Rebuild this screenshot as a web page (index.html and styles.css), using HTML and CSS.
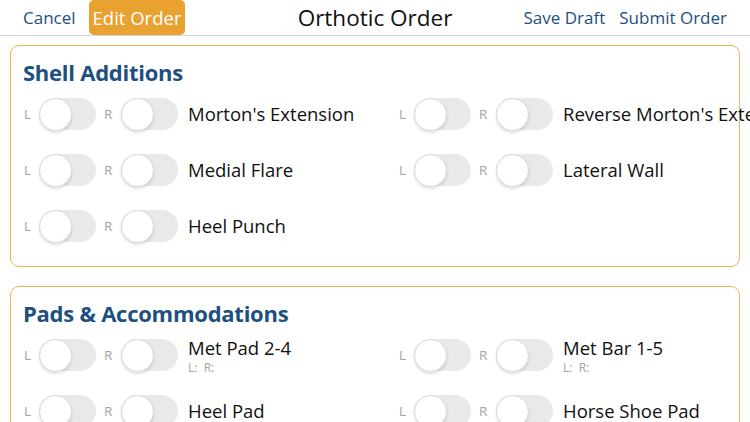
FILE: index.html
```html
<!DOCTYPE html>
<html lang="en">
<head>
<meta charset="utf-8">
<title>Orthotic Order</title>
<link rel="stylesheet" href="styles.css">
</head>
<body>
<header class="topbar">
  <div class="left">
    <span class="link">Cancel</span>
    <span class="btn-edit">Edit Order</span>
  </div>
  <h1 class="title">Orthotic Order</h1>
  <div class="right">
    <span class="link">Save Draft</span>
    <span class="link">Submit Order</span>
  </div>
</header>
<main class="content">
  <section class="card">
    <h2 class="card-title">Shell Additions</h2>
    <div class="grid">
      <div class="item"><span class="side">L</span><span class="toggle"></span><span class="side r">R</span><span class="toggle"></span><div class="label"><div class="name">Morton's Extension</div></div></div>
      <div class="item"><span class="side">L</span><span class="toggle"></span><span class="side r">R</span><span class="toggle"></span><div class="label"><div class="name">Reverse Morton's Extension</div></div></div>
      <div class="item"><span class="side">L</span><span class="toggle"></span><span class="side r">R</span><span class="toggle"></span><div class="label"><div class="name">Medial Flare</div></div></div>
      <div class="item"><span class="side">L</span><span class="toggle"></span><span class="side r">R</span><span class="toggle"></span><div class="label"><div class="name">Lateral Wall</div></div></div>
      <div class="item"><span class="side">L</span><span class="toggle"></span><span class="side r">R</span><span class="toggle"></span><div class="label"><div class="name">Heel Punch</div></div></div>
    </div>
  </section>
  <section class="card">
    <h2 class="card-title">Pads &amp; Accommodations</h2>
    <div class="grid">
      <div class="item"><span class="side">L</span><span class="toggle"></span><span class="side r">R</span><span class="toggle"></span><div class="label"><div class="name">Met Pad 2-4</div><div class="sub">L:&nbsp; R:</div></div></div>
      <div class="item"><span class="side">L</span><span class="toggle"></span><span class="side r">R</span><span class="toggle"></span><div class="label"><div class="name">Met Bar 1-5</div><div class="sub">L:&nbsp; R:</div></div></div>
      <div class="item"><span class="side">L</span><span class="toggle"></span><span class="side r">R</span><span class="toggle"></span><div class="label"><div class="name">Heel Pad</div></div></div>
      <div class="item"><span class="side">L</span><span class="toggle"></span><span class="side r">R</span><span class="toggle"></span><div class="label"><div class="name">Horse Shoe Pad</div></div></div>
    </div>
  </section>
</main>
</body>
</html>
```

FILE: styles.css
```css
html, body {
  margin: 0;
  padding: 0;
  background: #ffffff;
  overflow: hidden;
  width: 750px;
  height: 422px;
}
body {
  font-family: "Open Sans", "Noto Sans", sans-serif;
  color: #111;
}
.topbar {
  display: grid;
  grid-template-columns: 1fr auto 1fr;
  align-items: center;
  height: 36px;
  border-bottom: 1px solid #d6d6d6;
  box-sizing: border-box;
}
.left {
  display: flex;
  align-items: center;
  padding-left: 23px;
  gap: 13px;
  height: 100%;
}
.right {
  display: flex;
  align-items: center;
  justify-content: flex-end;
  padding-right: 23px;
  gap: 14px;
}
.link {
  color: #1d4f7f;
  font-size: 17px;
  font-weight: 500;
}
.btn-edit {
  background: #e9a12f;
  color: #fff;
  font-size: 18.5px;
  height: 35px;
  align-self: flex-start;
  display: flex;
  align-items: center;
  padding: 0 4px;
  border-radius: 5px;
}
.title {
  margin: 0;
  font-size: 22.5px;
  font-weight: 400;
  color: #111;
}
.content {
  padding: 9px 10px 0;
  display: flex;
  flex-direction: column;
  gap: 19px;
}
.card {
  border: 1px solid #ebb557;
  border-radius: 9px;
  padding: 12px 12px 12px;
}
.card-title {
  margin: 0;
  font-size: 22px;
  line-height: 28px;
  font-weight: 700;
  letter-spacing: -0.25px;
  color: #1d4f7f;
}
.grid {
  display: grid;
  grid-template-columns: 375px 375px;
}
.item {
  display: flex;
  align-items: center;
  height: 56px;
  white-space: nowrap;
}
.side {
  flex-shrink: 0;
  width: 16px;
  font-size: 13.5px;
  color: #a3a3a3;
  padding-left: 1px;
  box-sizing: border-box;
}
.side.r {
  width: 25px;
  padding-left: 8px;
}
.toggle {
  flex-shrink: 0;
  position: relative;
  width: 57px;
  height: 32px;
  border-radius: 16px;
  background: #e9e9e9;
}
.toggle::after {
  content: "";
  position: absolute;
  left: 0;
  top: 0;
  width: 33px;
  height: 33px;
  border-radius: 50%;
  background: #fff;
  border: 1px solid #dcdcdc;
  box-sizing: border-box;
  box-shadow: 0 2px 3px rgba(0,0,0,0.12);
}
.label {
  flex-shrink: 0;
  margin-left: 10px;
  display: flex;
  flex-direction: column;
}
.name {
  font-size: 18.5px;
  line-height: 22px;
  color: #111;
}
.sub {
  margin-top: 2px;
  font-size: 12px;
  line-height: 13px;
  color: #a3a3a3;
}
```
